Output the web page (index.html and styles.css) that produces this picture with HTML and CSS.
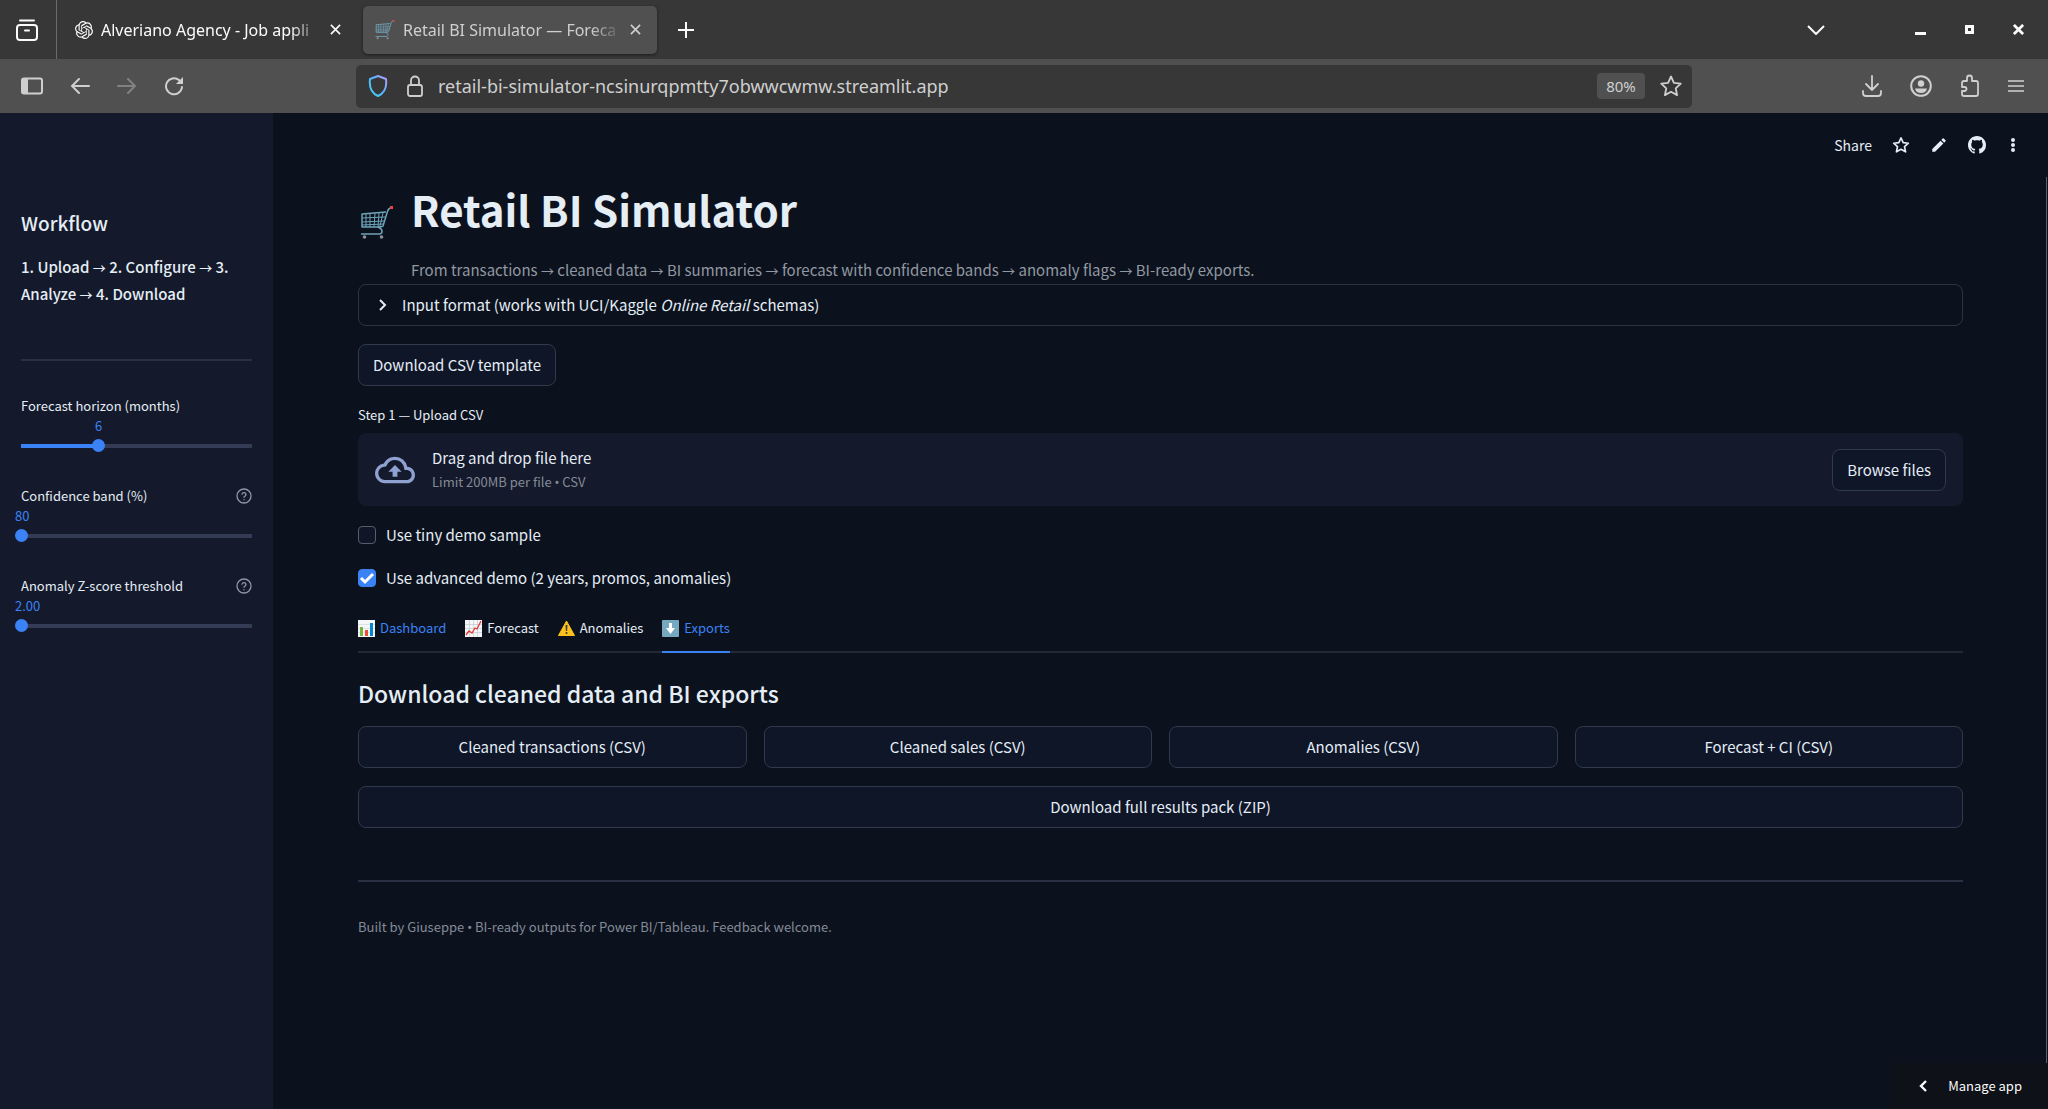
FILE: index.html
```html
<!DOCTYPE html>
<html lang="en">
<head>
<meta charset="utf-8">
<title>Retail BI Simulator — Forecast</title>
<link rel="stylesheet" href="styles.css">
</head>
<body>
<svg class="defs" aria-hidden="true">
  <symbol id="cart" viewBox="0 0 34 34">
    <g fill="none" stroke="#6fa3b8" stroke-width="1.5" stroke-linejoin="round">
      <path d="M31 2c-3 0-3 2-4 5l-4 13c-1 1-3 1-5 1H2V8l24-2"/>
      <path d="M2 12l23-1M2 16l22-1M2 19l21-1M6 8v13M10 8v13M15 7l-1 14M19 7l-1 14M23 7l-3 13" stroke-width="1"/>
      <path d="M18 21c5 2 5 6 2 7H1"/>
    </g>
    <path d="M30 0h3v3h-3z" fill="#e8483c"/>
    <circle cx="4.500" cy="31" r="1.800" fill="#8a9298"/><circle cx="21.500" cy="31" r="1.800" fill="#8a9298"/>
  </symbol>
  <symbol id="close" viewBox="0 0 12 12"><path d="M1 1l10 10M11 1L1 11" fill="none" stroke="currentColor" stroke-width="1.800"/></symbol>
  <symbol id="star" viewBox="0 0 24 24"><path d="M12 2.500l2.900 6.300 6.900.8-5.100 4.700 1.400 6.800-6.100-3.400-6.100 3.400 1.400-6.800-5.100-4.700 6.900-.8z" fill="none" stroke="currentColor" stroke-linejoin="round"/></symbol>
  <symbol id="help" viewBox="0 0 24 24"><g fill="none" stroke="currentColor" stroke-width="2" stroke-linecap="round" stroke-linejoin="round"><circle cx="12" cy="12" r="10.500"/><path d="M9 9.200a3 3 0 0 1 5.900.8c0 2-2.900 2.600-2.900 4M12 17.500v.1"/></g></symbol>
</svg>

<header class="browser">
  <div class="tabstrip">
    <button class="tool recent" aria-label="Recent browsing">
      <svg width="24" height="24" viewBox="0 0 24 24" fill="none" stroke="currentColor" stroke-width="2" stroke-linecap="round"><rect x="2" y="7" width="20" height="15" rx="3"/><path d="M5 2.500h14M10 12.500h4"/></svg>
    </button>
    <div class="tab">
      <svg width="18" height="18" viewBox="0 0 24 24" fill="currentColor"><path d="M22.282 9.821a5.985 5.985 0 0 0-.516-4.910 6.046 6.046 0 0 0-6.510-2.900A6.065 6.065 0 0 0 4.981 4.180a5.985 5.985 0 0 0-3.998 2.900 6.046 6.046 0 0 0 .743 7.097 5.980 5.980 0 0 0 .510 4.911 6.051 6.051 0 0 0 6.515 2.900A5.985 5.985 0 0 0 13.260 24a6.056 6.056 0 0 0 5.772-4.206 5.990 5.990 0 0 0 3.997-2.900 6.056 6.056 0 0 0-.747-7.073zM13.260 22.430a4.476 4.476 0 0 1-2.876-1.040l.141-.081 4.779-2.758a.795.795 0 0 0 .392-.681v-6.737l2.020 1.168a.071.071 0 0 1 .038.052v5.583a4.504 4.504 0 0 1-4.494 4.494zM3.600 18.304a4.470 4.470 0 0 1-.535-3.014l.142.085 4.783 2.759a.771.771 0 0 0 .780 0l5.843-3.369v2.332a.080.080 0 0 1-.033.062L9.740 19.950a4.500 4.500 0 0 1-6.140-1.646zM2.340 7.896a4.485 4.485 0 0 1 2.366-1.973V11.600a.766.766 0 0 0 .388.676l5.815 3.355-2.020 1.168a.076.076 0 0 1-.071 0l-4.830-2.786A4.504 4.504 0 0 1 2.340 7.872zm16.597 3.855l-5.833-3.387L15.119 7.200a.076.076 0 0 1 .071 0l4.830 2.791a4.494 4.494 0 0 1-.676 8.105v-5.678a.790.790 0 0 0-.407-.667zm2.010-3.023l-.141-.085-4.774-2.782a.776.776 0 0 0-.785 0L9.409 9.230V6.897a.066.066 0 0 1 .028-.061l4.830-2.787a4.500 4.500 0 0 1 6.680 4.660zm-12.640 4.135l-2.020-1.164a.080.080 0 0 1-.038-.057V6.075a4.500 4.500 0 0 1 7.375-3.453l-.142.080L8.704 5.460a.795.795 0 0 0-.393.681zm1.097-2.365l2.602-1.500 2.607 1.500v2.999l-2.597 1.500-2.607-1.500z"/></svg>
      <span class="tab-title">Alveriano Agency - Job appli</span>
      <button class="tool" aria-label="Close tab"><svg width="11" height="11"><use href="#close"/></svg></button>
    </div>
    <div class="tab tab-current">
      <svg width="20" height="20"><use href="#cart"/></svg>
      <span class="tab-title">Retail BI Simulator — Foreca</span>
      <button class="tool" aria-label="Close tab"><svg width="11" height="11"><use href="#close"/></svg></button>
    </div>
    <button class="tool new-tab" aria-label="New tab"><svg width="16" height="16" viewBox="0 0 16 16" stroke="currentColor" stroke-width="2"><path d="M8 0v16M0 8h16"/></svg></button>
    <div class="window-tools">
      <button class="tool all-tabs" aria-label="List all tabs"><svg width="18" height="10" viewBox="0 0 18 10" fill="none" stroke="currentColor" stroke-width="2"><path d="M1 1l8 8 8-8"/></svg></button>
      <button class="tool" aria-label="Minimize"><svg width="12" height="12" viewBox="0 0 12 12" fill="currentColor"><path d="M0 8h11v3H0z"/></svg></button>
      <button class="tool" aria-label="Maximize"><svg width="10" height="10" viewBox="0 0 10 10" fill="none" stroke="currentColor" stroke-width="3"><path d="M1.500 1.500h6v6h-6z"/></svg></button>
      <button class="tool" aria-label="Close window"><svg width="11" height="11" viewBox="0 0 12 12" stroke="currentColor" stroke-width="3"><path d="M1 1l10 10M11 1L1 11"/></svg></button>
    </div>
  </div>
  <div class="navbar">
    <div class="nav-group">
      <button class="tool" aria-label="Sidebar"><svg width="22" height="18" viewBox="0 0 22 18"><rect x="1" y="1.500" width="20" height="15" rx="2" fill="none" stroke="currentColor" stroke-width="2"/><path d="M2 2h5v14H2z" fill="currentColor"/></svg></button>
      <button class="tool" aria-label="Back"><svg width="20" height="18" viewBox="0 0 20 18" fill="none" stroke="currentColor" stroke-width="2" stroke-linecap="round"><path d="M9 2L2 9l7 7M2 9h17"/></svg></button>
      <button class="tool" aria-label="Forward" disabled><svg width="20" height="18" viewBox="0 0 20 18" fill="none" stroke="currentColor" stroke-width="2" stroke-linecap="round"><path d="M11 2l7 7-7 7M18 9H1"/></svg></button>
      <button class="tool" aria-label="Reload"><svg width="20" height="20" viewBox="0 0 20 20" fill="none" stroke="currentColor" stroke-width="2" stroke-linecap="round"><path d="M18 11a8 8 0 1 1-3-7l3 3"/><path d="M19 1v7h-7z" fill="currentColor" stroke="none"/></svg></button>
    </div>
    <div class="urlbar">
      <svg width="20" height="22" viewBox="0 0 20 22"><defs><linearGradient id="sh" x1="1" y1="0" x2="0" y2="1"><stop offset="0" stop-color="#b49cff"/><stop offset=".5" stop-color="#54b4ff"/><stop offset="1" stop-color="#3ad6f5"/></linearGradient></defs><path d="M10 1l8 3c1 8-1 14-8 17C3 18 1 12 2 4z" fill="none" stroke="url(#sh)" stroke-width="2" stroke-linejoin="round"/></svg>
      <svg width="18" height="22" viewBox="0 0 18 22" fill="none" stroke="currentColor" stroke-width="1.800"><rect x="2" y="10" width="14" height="11" rx="2"/><path d="M5 10V5.500a4 4 0 0 1 8 0V10"/></svg>
      <input class="url" type="text" aria-label="Address" value="retail-bi-simulator-ncsinurqpmtty7obwwcwmw.streamlit.app">
      <button class="zoom-level">80%</button>
      <button class="tool" aria-label="Bookmark"><svg width="24" height="24" stroke-width="1.800"><use href="#star"/></svg></button>
    </div>
    <div class="nav-group nav-end">
      <button class="tool" aria-label="Downloads"><svg width="20" height="22" viewBox="0 0 20 22" fill="none" stroke="currentColor" stroke-width="1.800" stroke-linecap="round" stroke-linejoin="round"><path d="M10 1v14M4 9l6 6 6-6M1 16v2q0 3 3 3h12q3 0 3-3v-2"/></svg></button>
      <button class="tool" aria-label="Account"><svg width="22" height="22" viewBox="0 0 22 22"><circle cx="11" cy="11" r="9.800" fill="none" stroke="currentColor" stroke-width="2"/><circle cx="11" cy="8.500" r="3.200" fill="currentColor"/><path d="M5 13.500h12q-1 4.500-6 4.500t-6-4.500z" fill="currentColor"/></svg></button>
      <button class="tool" aria-label="Extensions"><svg width="20" height="24" viewBox="0 0 20 24" fill="none" stroke="currentColor" stroke-width="1.800" stroke-linejoin="round"><path d="M2 13V9q0-2 2-2h3V4a2.500 2.500 0 0 1 5 0v3h4q2 0 2 2v11q0 2-2 2H4q-2 0-2-2v-3h2.500a2 2 0 0 0 0-4z"/></svg></button>
      <button class="tool" aria-label="Menu"><svg width="16" height="14" viewBox="0 0 16 14" stroke="currentColor" stroke-width="1.600"><path d="M0 2h16M0 7h16M0 12h16"/></svg></button>
    </div>
  </div>
</header>

<div class="app">
  <aside class="sidebar">
    <h2 class="side-title">Workflow</h2>
    <p class="steps">1. Upload <span class="arrow">→</span> 2. Configure <span class="arrow">→</span> 3. Analyze <span class="arrow">→</span> 4. Download</p>
    <hr class="rule">
    <div class="sliders">
      <div class="slider" style="--pos: 33.3%">
        <label for="horizon">Forecast horizon (months)</label>
        <output class="mid" for="horizon">6</output>
        <input id="horizon" type="range" min="3" max="12" value="6">
      </div>
      <div class="slider">
        <div class="label-row"><label for="band">Confidence band (%)</label><svg class="help" width="16" height="16"><use href="#help"/></svg></div>
        <output for="band">80</output>
        <input id="band" type="range" min="80" max="99" value="80">
      </div>
      <div class="slider">
        <div class="label-row"><label for="zscore">Anomaly Z-score threshold</label><svg class="help" width="16" height="16"><use href="#help"/></svg></div>
        <output for="zscore">2.00</output>
        <input id="zscore" type="range" min="2" max="5" step="0.1" value="2">
      </div>
    </div>
  </aside>

  <main class="main">
    <div class="toolbar">
      <button class="tool share">Share</button>
      <button class="tool" aria-label="Favorite"><svg width="18" height="18" stroke-width="2.200"><use href="#star"/></svg></button>
      <button class="tool" aria-label="Edit"><svg width="18" height="18" viewBox="0 0 24 24" fill="currentColor"><path d="M3 17.250V21h3.750L17.810 9.940l-3.750-3.750zM20.710 7.040a1 1 0 0 0 0-1.410l-2.340-2.340a1 1 0 0 0-1.410 0l-1.830 1.830 3.750 3.750z"/></svg></button>
      <button class="tool" aria-label="GitHub"><svg width="18" height="18" viewBox="0 0 16 16" fill="currentColor"><path d="M8 0C3.580 0 0 3.580 0 8c0 3.540 2.290 6.530 5.470 7.590.4.070.55-.17.55-.38 0-.19-.01-.82-.01-1.490-2.010.37-2.530-.49-2.690-.94-.09-.23-.48-.94-.82-1.130-.28-.15-.68-.52-.01-.53.63-.01 1.080.58 1.230.82.72 1.210 1.870.87 2.330.66.07-.52.28-.87.51-1.070-1.780-.2-3.640-.89-3.640-3.950 0-.87.31-1.590.82-2.150-.08-.2-.36-1.020.08-2.120 0 0 .67-.21 2.200.82.64-.18 1.320-.27 2-.27s1.360.09 2 .27c1.530-1.040 2.200-.82 2.200-.82.44 1.100.16 1.920.08 2.120.51.56.82 1.270.82 2.150 0 3.070-1.870 3.750-3.650 3.950.29.25.54.73.54 1.480 0 1.070-.01 1.930-.01 2.200 0 .21.15.46.55.38A8.010 8.010 0 0 0 16 8c0-4.420-3.580-8-8-8z"/></svg></button>
      <button class="tool" aria-label="More"><svg width="14" height="16" viewBox="0 0 14 16" fill="currentColor"><circle cx="7" cy="3" r="2"/><circle cx="7" cy="8" r="2"/><circle cx="7" cy="13" r="2"/></svg></button>
    </div>

    <div class="content">
      <div class="hero">
        <svg class="hero-icon" width="34" height="34"><use href="#cart"/></svg>
        <div>
          <h1>Retail BI Simulator</h1>
          <p class="caption">From transactions <span class="arrow">→</span> cleaned data <span class="arrow">→</span> BI summaries <span class="arrow">→</span> forecast with confidence bands <span class="arrow">→</span> anomaly flags <span class="arrow">→</span> BI-ready exports.</p>
        </div>
      </div>

      <details class="expander">
        <summary><svg width="16" height="16" viewBox="0 0 16 16" fill="none" stroke="currentColor" stroke-width="2"><path d="M6 3l5 5-5 5"/></svg><span>Input format (works with UCI/Kaggle <em>Online Retail</em> schemas)</span></summary>
      </details>

      <button class="btn">Download CSV template</button>

      <section class="upload">
        <label for="file">Step 1 — Upload CSV</label>
        <div class="dropzone">
          <svg width="40" height="40" viewBox="0 0 24 24" fill="#8fa1d0"><path d="M19.350 10.040A7.490 7.490 0 0 0 12 4C9.110 4 6.600 5.640 5.350 8.040A5.994 5.994 0 0 0 0 14c0 3.310 2.690 6 6 6h13c2.760 0 5-2.240 5-5 0-2.640-2.050-4.780-4.650-4.960zM19 18H6c-2.210 0-4-1.790-4-4 0-2.050 1.530-3.760 3.560-3.970l1.070-.11.5-.95A5.469 5.469 0 0 1 12 6c2.620 0 4.880 1.860 5.390 4.430l.3 1.500 1.530.11c1.560.1 2.780 1.410 2.780 2.960 0 1.650-1.350 3-3 3zM8 13h2.550v3h2.900v-3H16l-4-4z"/></svg>
          <div class="drop-text"><span>Drag and drop file here</span><small>Limit 200MB per file <span class="dot">•</span> CSV</small></div>
          <button class="btn" id="file">Browse files</button>
        </div>
      </section>

      <div class="checks">
        <label class="check"><input type="checkbox"><span>Use tiny demo sample</span></label>
        <label class="check"><input type="checkbox" checked><span>Use advanced demo (2 years, promos, anomalies)</span></label>
      </div>

      <div class="tabs" role="tablist">
        <button class="view hover" role="tab"><svg width="17" height="17" viewBox="0 0 17 17"><path d="M0 0h17v17H0z" fill="#f4f6f7"/><path d="M0 4.500h17M0 8.500h17M0 12.500h17" stroke="#cfd6da" stroke-width=".6"/><path d="M2 7h3v9H2z" fill="#7cb342"/><path d="M7 10h3v6H7z" fill="#f04a3e"/><path d="M12 3h3v13h-3z" fill="#0288d1"/></svg>Dashboard</button>
        <button class="view" role="tab"><svg width="17" height="17" viewBox="0 0 17 17"><path d="M0 0h17v17H0z" fill="#f4f6f7"/><path d="M0 4.500h17M0 8.500h17M0 12.500h17M4.500 0v17M8.500 0v17M12.500 0v17" stroke="#b9c6cc" stroke-width=".6"/><path d="M1 15l3-4 3 2 3-5 2 1 4-8" fill="none" stroke="#e53935" stroke-width="1.300"/></svg>Forecast</button>
        <button class="view" role="tab"><svg width="17" height="17" viewBox="0 0 17 17"><path d="M8.500 1L16.500 15.500H.5z" fill="#fcc21b" stroke="#fcc21b" stroke-linejoin="round"/><path d="M7.500 5h2l-.4 6H7.900z" fill="#3c3c3c"/><circle cx="8.500" cy="13" r="1.100" fill="#3c3c3c"/></svg>Anomalies</button>
        <button class="view selected" role="tab" aria-selected="true"><svg width="17" height="17" viewBox="0 0 17 17"><rect width="17" height="17" rx="1" fill="#76a9bf"/><path d="M7 3h3v5h3l-4.500 6L4 8h3z" fill="#fff"/></svg>Exports</button>
      </div>

      <h3>Download cleaned data and BI exports</h3>
      <div class="exports">
        <button class="btn">Cleaned transactions (CSV)</button>
        <button class="btn">Cleaned sales (CSV)</button>
        <button class="btn">Anomalies (CSV)</button>
        <button class="btn">Forecast + CI (CSV)</button>
        <button class="btn wide">Download full results pack (ZIP)</button>
      </div>

      <hr class="rule">
      <p class="footer">Built by Giuseppe <span class="dot">•</span> BI-ready outputs for Power BI/Tableau. Feedback welcome.</p>
    </div>
  </main>
  <div class="scroll-thumb"></div>
  <button class="manage"><svg width="10" height="14" viewBox="0 0 10 14" fill="none" stroke="currentColor" stroke-width="2.400"><path d="M8 2L3 7l5 5"/></svg>Manage app</button>
</div>
</body>
</html>
```
FILE: styles.css
```css
* { box-sizing: border-box; }

body {
  margin: 0;
  min-height: 100vh;
  display: flex;
  flex-direction: column;
  background: #0b121e;
  color: #e5edf5;
  font: 15px/24px "Noto Sans CJK SC", "Noto Sans", sans-serif;
}

button, input { font: inherit; color: inherit; }
h1, h2, h3, p { margin: 0; }
svg { flex: none; display: block; }
.defs { position: absolute; width: 0; height: 0; }
.arrow { font-size: 13px; line-height: 1; }
.dot { font-family: "Noto Sans", sans-serif; line-height: 1; }

.tool {
  display: flex;
  align-items: center;
  justify-content: center;
  padding: 0;
  border: 0;
  background: none;
}
.tool:disabled { color: #828282; }

/* Browser window */
.browser { font-family: "Noto Sans", sans-serif; font-size: 18px; color: #fbfbfb; }

.tabstrip { display: flex; align-items: center; height: 59px; background: #373737; }
.recent { width: 57px; align-self: stretch; padding-right: 3px; border-right: 1px solid #6a6a6a; }
.tab {
  display: flex;
  align-items: center;
  gap: 8px;
  width: 294px;
  height: 48px;
  margin-left: 6px;
  padding: 0 16px 0 12px;
  border-radius: 5px;
  font-size: 16px;
}
.tab-current { background: #505050; color: #cfcfcf; box-shadow: 0 1px 3px #1c1c1c; }
.tab-title {
  flex: 1;
  overflow: hidden;
  white-space: nowrap;
  mask-image: linear-gradient(to left, transparent, #000 32px);
}
.new-tab { margin-left: 21px; }
.window-tools { display: flex; align-items: center; gap: 38px; margin-left: auto; padding-right: 24px; }
.all-tabs { margin-right: 52px; }

.navbar {
  display: grid;
  grid-template-columns: 1fr minmax(0, 1336px) 1fr;
  align-items: center;
  height: 54px;
  background: #505050;
  color: #cfcfcf;
}
.nav-group { display: flex; align-items: center; gap: 27px; padding-left: 21px; }
.nav-end { gap: 28px; justify-content: flex-end; padding: 0 24px 0 0; }
.urlbar {
  display: flex;
  align-items: center;
  gap: 18px;
  height: 43px;
  padding: 0 9px 0 12px;
  border-radius: 5px;
  background: #373737;
}
.url { flex: 1; min-width: 0; margin-left: -4px; padding: 0; border: 0; background: none; outline: 0; }
.zoom-level { height: 26px; width: 48px; margin-right: -4px; padding: 0; border: 0; border-radius: 4px; background: #505050; font-size: 15px; line-height: 20px; }

/* App */
.app { flex: 1; display: flex; position: relative; }

.sidebar { flex: none; width: 273px; padding: 96px 21px 24px; background: #141a2b; }
.side-title { font-size: 19px; line-height: 28px; font-weight: 500; }
.steps { margin-top: 16px; line-height: 27px; font-weight: 500; }
.rule { height: 2px; margin: 52px 0 35px; border: 0; background: #2a3042; }
.sliders { display: grid; gap: 30px; font-size: 13px; line-height: 20px; }
.slider { display: grid; --pos: 0%; }
.slider output { margin-left: -6px; color: #3b82f6; }
.slider output.mid { margin-left: calc(var(--pos) - 3px); }
.label-row { display: flex; justify-content: space-between; align-items: center; }
.help { color: #8f95a3; }

.slider input { appearance: none; width: calc(100% + 12px); height: 20px; margin: 0 -6px; background: none; }
.slider input::-webkit-slider-runnable-track {
  height: 4px;
  border-radius: 2px;
  background: linear-gradient(to right, #3b82f6 var(--pos), #333b55 var(--pos)) center / calc(100% - 12px) 4px no-repeat;
}
.slider input::-webkit-slider-thumb {
  appearance: none;
  width: 13px;
  height: 13px;
  margin-top: -5px;
  border-radius: 50%;
  background: #3b82f6;
}

.main { flex: 1; min-width: 0; }
.toolbar { display: flex; align-items: center; justify-content: flex-end; gap: 20px; height: 64px; padding-right: 28px; }
.share { font-size: 14px; }

.content { padding: 4px 85px 48px; }
.hero { display: flex; gap: 17px; margin-bottom: 2px; padding-left: 2px; }
.hero-icon { margin-top: 25px; }
h1 { font-size: 42px; line-height: 56px; font-weight: 700; }
.caption { margin-top: 21px; color: #9298a1; }

.expander { border: 1px solid #2c3442; border-radius: 8px; }
.expander summary { display: flex; align-items: center; gap: 12px; height: 40px; padding: 0 15px; list-style: none; }
.expander + .btn { margin-top: 18px; }

.btn {
  height: 42px;
  padding: 0 14px;
  border: 1px solid #303a4a;
  border-radius: 8px;
  background: #0e1628;
}

.upload { margin-top: 19px; }
.upload > label { display: block; font-size: 13px; line-height: 20px; }
.dropzone {
  display: flex;
  align-items: center;
  gap: 17px;
  height: 73px;
  margin-top: 8px;
  padding: 0 17px;
  border-radius: 8px;
  background: #141a2b;
}
.drop-text { flex: 1; display: grid; }
.drop-text small { font-size: 13px; color: #848a97; }

.checks { display: grid; gap: 19px; margin-top: 17px; justify-items: start; }
.check { display: flex; align-items: center; gap: 10px; }
.check input {
  appearance: none;
  width: 18px;
  height: 18px;
  margin: 0;
  border: 1px solid #565d6b;
  border-radius: 4px;
  background: #0e1628;
}
.check input:checked {
  border-color: #3b82f6;
  background: #3b82f6 url("data:image/svg+xml,%3Csvg xmlns='http://www.w3.org/2000/svg' viewBox='0 0 16 16'%3E%3Cpath d='M2 8l4 4 8-8' fill='none' stroke='white' stroke-width='3'/%3E%3C/svg%3E");
}

.tabs { display: flex; gap: 19px; margin-top: 28px; box-shadow: inset 0 -2px #232a37; }
.view {
  display: flex;
  align-items: center;
  gap: 5px;
  padding: 0 0 13px;
  border: 0;
  border-bottom: 2px solid transparent;
  background: none;
  font-size: 13px;
  line-height: 20px;
}
.hover, .selected { color: #3b82f6; }
.selected { border-color: #3b82f6; }

h3 { margin-top: 24px; font-size: 23px; line-height: 32px; font-weight: 500; }
.exports { display: grid; grid-template-columns: repeat(4, 1fr); gap: 18px 17px; margin-top: 17px; }
.wide { grid-column: 1 / -1; }
.footer { font-size: 13px; line-height: 20px; color: #848a97; }

.scroll-thumb { position: absolute; right: 1px; top: 64px; bottom: 46px; width: 1px; background: #5b616b; }
.manage {
  position: absolute;
  right: 0;
  bottom: 0;
  display: flex;
  align-items: center;
  gap: 20px;
  height: 46px;
  padding: 0 26px 0 28px;
  border: 0;
  border-radius: 8px 0 0 0;
  background: #0e1117;
  color: #fafafa;
  font-size: 13px;
}
```
